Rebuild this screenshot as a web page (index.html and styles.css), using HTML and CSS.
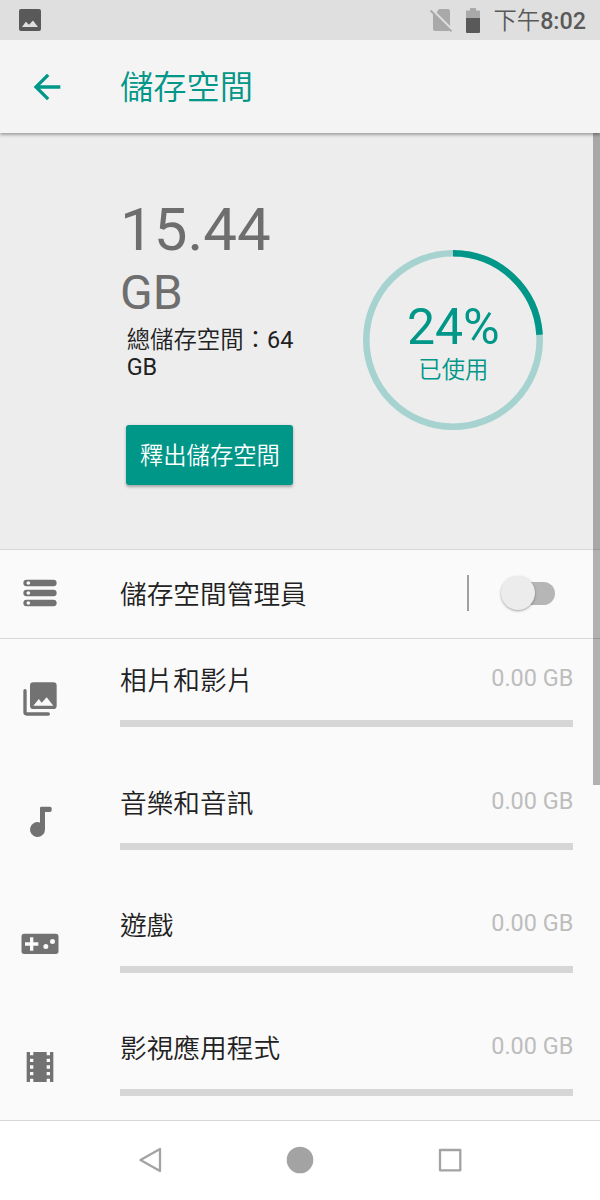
FILE: index.html
```html
<!DOCTYPE html>
<html lang="zh-Hant">
<head>
<meta charset="utf-8">
<title>儲存空間</title>
<link rel="stylesheet" href="styles.css">
</head>
<body>
<div class="screen">
  <header class="status">
    <svg class="status-photo" viewBox="0 0 22 22"><path fill-rule="evenodd" d="M2 0h18a2 2 0 0 1 2 2v18a2 2 0 0 1-2 2H2a2 2 0 0 1-2-2V2a2 2 0 0 1 2-2zM3 18h16l-5-6.500-4 4.300-3.200-3z"/></svg>
    <div class="status-right">
      <svg class="status-sim" viewBox="0 0 24 24"><path d="M10 1h9a2 2 0 0 1 2 2v15L7.500 4.500zM4 4.600L21 21.800a2 2 0 0 1-2 1.200H6a2 2 0 0 1-2-2z"/><path class="slash-gap" d="M3 1.800l20 20"/><path class="slash" d="M1.500 2.500l21 21"/></svg>
      <svg class="status-battery" viewBox="0 0 14 25"><path class="battery-empty" d="M4 0h6v2.500h3a1 1 0 0 1 1 1V10H0V3.500a1 1 0 0 1 1-1h3z"/><path d="M0 10h14v14a1 1 0 0 1-1 1H1a1 1 0 0 1-1-1z"/></svg>
      <span class="clock">下午<b>8:02</b></span>
    </div>
  </header>
  <div class="appbar">
    <svg class="back" viewBox="0 0 24 24"><path d="M20 11H7.830l5.590-5.590L12 4l-8 8 8 8 1.410-1.410L7.830 13H20z"/></svg>
    <h1 class="title">儲存空間</h1>
  </div>
  <main class="content">
    <section class="summary">
      <div class="usage">
        <div class="amount">15.44</div>
        <div class="unit">GB</div>
        <div class="total">總儲存空間：64<br>GB</div>
        <button class="free">釋出儲存空間</button>
      </div>
      <div class="donut">
        <svg class="ring" viewBox="0 0 180 180"><circle class="ring-track" cx="90" cy="90" r="86.700"/><circle class="ring-value" cx="90" cy="90" r="86.700" pathLength="100" transform="rotate(-90 90 90)"/></svg>
        <div class="donut-label"><div class="percent">24%</div><div class="used">已使用</div></div>
      </div>
    </section>
    <section class="manager">
      <svg class="icon" viewBox="0 0 24 24"><path fill-rule="evenodd" d="M4 4h16a2 2 0 0 1 0 4H4a2 2 0 0 1 0-4zm1 .900a1.100 1.100 0 1 0 0 2.200 1.100 1.100 0 0 0 0-2.200zM4 10h16a2 2 0 0 1 0 4H4a2 2 0 0 1 0-4zm1 .900a1.100 1.100 0 1 0 0 2.200 1.100 1.100 0 0 0 0-2.200zM4 16h16a2 2 0 0 1 0 4H4a2 2 0 0 1 0-4zm1 .900a1.100 1.100 0 1 0 0 2.200 1.100 1.100 0 0 0 0-2.200z"/></svg>
      <span class="label">儲存空間管理員</span>
      <span class="separator"></span>
      <span class="switch"><span class="thumb"></span></span>
    </section>
    <section class="list">
      <div class="item">
        <svg class="icon" viewBox="0 0 24 24"><path fill-rule="evenodd" d="M8 2h12a2 2 0 0 1 2 2v12a2 2 0 0 1-2 2H8a2 2 0 0 1-2-2V4a2 2 0 0 1 2-2zM8 16h12l-4-5-3 3.300-1.700-2.300z"/><path d="M2 7a1 1 0 0 1 2 0v13h13a1 1 0 0 1 0 2H4a2 2 0 0 1-2-2z"/></svg>
        <div class="body"><div class="line"><span class="label">相片和影片</span><span class="size">0.00 GB</span></div><div class="bar"></div></div>
      </div>
      <div class="item">
        <svg class="icon" viewBox="0 0 24 24"><path d="M12 3.600a.800.800 0 0 1 .800-.800H18a1 1 0 0 1 1 1V5a1 1 0 0 1-1 1h-3v10.500A4.500 4.500 0 1 1 12 12.260z"/></svg>
        <div class="body"><div class="line"><span class="label">音樂和音訊</span><span class="size">0.00 GB</span></div><div class="bar"></div></div>
      </div>
      <div class="item">
        <svg class="icon" viewBox="0 0 24 24"><path fill-rule="evenodd" d="M2.500 5.800h19A1.600 1.600 0 0 1 23.100 7.400v9a1.600 1.600 0 0 1-1.600 1.600h-19A1.600 1.600 0 0 1 .900 16.400v-9A1.600 1.600 0 0 1 2.500 5.800zM6 8v3H3v2h3v3h2v-3h3v-2H8V8zm9.500 4a1.500 1.500 0 1 0 0 3 1.500 1.500 0 0 0 0-3zm4-3a1.500 1.500 0 1 0 0 3 1.500 1.500 0 0 0 0-3z"/></svg>
        <div class="body"><div class="line"><span class="label">遊戲</span><span class="size">0.00 GB</span></div><div class="bar"></div></div>
      </div>
      <div class="item">
        <svg class="icon" viewBox="0 0 24 24"><path d="M18 3v2h-2V3H8v2H6V3H4v18h2v-2h2v2h8v-2h2v2h2V3h-2zM8 17H6v-2h2v2zm0-4H6v-2h2v2zm0-4H6V7h2v2zm10 8h-2v-2h2v2zm0-4h-2v-2h2v2zm0-4h-2V7h2v2z"/></svg>
        <div class="body"><div class="line"><span class="label">影視應用程式</span><span class="size">0.00 GB</span></div><div class="bar"></div></div>
      </div>
    </section>
    <div class="scrollbar"></div>
  </main>
  <nav class="nav">
    <svg class="nav-icon" viewBox="0 0 30 30"><path class="outline" d="M5.500 15L25 4v22z"/></svg>
    <svg class="nav-icon" viewBox="0 0 30 30"><circle cx="15" cy="15" r="13.300"/></svg>
    <svg class="nav-icon" viewBox="0 0 30 30"><rect class="outline" x="5" y="5" width="20.300" height="20.300"/></svg>
  </nav>
</div>
</body>
</html>
```
FILE: styles.css
```css
* { box-sizing: border-box; }
body { margin: 0; font-family: Roboto, "Noto Sans CJK TC DemiLight", "Noto Sans CJK TC", sans-serif; color: #212121; }
svg { display: block; flex: none; }
.screen { width: 600px; height: 1200px; display: flex; flex-direction: column; overflow: hidden; background: #fafafa; }

.status { height: 40px; flex: none; background: #dfdfdf; display: flex; align-items: center; justify-content: space-between; padding: 0 14px 0 19px; }
.status svg { fill: #595959; }
.status-photo { width: 22px; height: 22px; }
.status-right { display: flex; align-items: center; }
.status-right .status-sim { width: 24px; height: 24px; margin-right: 13px; fill: #a9a9a9; }
.slash { stroke: #a9a9a9; stroke-width: 1.8; }
.slash-gap { stroke: #dfdfdf; stroke-width: 2; }
.status .battery-empty, .status .status-sim { fill: #a9a9a9; }
.status-battery { width: 14px; height: 25px; margin-right: 14px; }
.clock { font-size: 23.3px; line-height: 40px; padding-top: 2px; color: #595959; white-space: nowrap; }
.clock b { font-weight: 500; }

.appbar { position: relative; z-index: 2; height: 93px; flex: none; display: flex; align-items: center; padding-left: 26.700px; background: #f4f4f4; box-shadow: 0 2px 3px rgba(0,0,0,.32); clip-path: inset(0 0 -8px 0); }
.back { width: 40px; height: 40px; fill: #009688; }
.title { margin: 0 0 0 53.300px; padding-top: 3px; font-size: 33.300px; font-weight: 400; line-height: 48px; color: #009688; }

.content { position: relative; flex: 1; min-height: 0; }
.summary { height: 416.500px; display: flex; background: #ededed; border-bottom: 1.500px solid #d8d8d8; padding: 62px 56.700px 0 120px; justify-content: space-between; }
.amount { font-size: 60px; line-height: 70px; color: #6e6e6e; }
.unit { font-size: 48px; line-height: 56px; color: #6e6e6e; }
.total { margin: 6px 0 0 6.700px; font-size: 23.400px; line-height: 27.300px; white-space: nowrap; }
.free { display: block; margin: 43px 0 0 6.400px; width: 167px; height: 60px; padding: 0 0 2px; border: 0; border-radius: 3px; background: #009688; color: #fff; font: inherit; font-size: 23.300px; box-shadow: 0 1.500px 3px rgba(0,0,0,.3); }
.donut { display: grid; width: 180px; height: 180px; margin-top: 55px; }
.donut > * { grid-area: 1 / 1; }
.ring { width: 180px; height: 180px; fill: none; stroke-width: 6.600; }
.ring-track { stroke: #a6d3cf; }
.ring-value { stroke: #009688; stroke-dasharray: 24 76; }
.donut-label { color: #009688; text-align: center; padding-top: 47.500px; }
.percent { font-size: 50px; line-height: 58px; }
.used { font-size: 23.300px; line-height: 28px; }

.icon { width: 40px; height: 40px; fill: #727272; }
.label { font-size: 26.700px; line-height: 40px; white-space: nowrap; }
.manager { height: 89.700px; display: flex; align-items: center; padding: 0 0 1px 20px; border-bottom: 1.500px solid #d8d8d8; }
.manager .label { margin-left: 60px; width: 346.500px; padding-top: 3px; }
.separator { width: 2px; height: 36px; background: #a0a0a0; }
.switch { margin-left: 39px; width: 47px; height: 23.300px; border-radius: 12px; background: #b6b6b6; display: flex; align-items: center; }
.thumb { flex: none; width: 34px; height: 34px; margin-left: -7px; border-radius: 50%; background: #ececec; box-shadow: 0 1px 2.500px rgba(0,0,0,.35); }

.item { height: 122.830px; display: flex; padding: 0 26.700px 0 20px; }
.item .icon { margin-top: 39.500px; }
.body { flex: 1; margin-left: 60px; }
.line { display: flex; justify-content: space-between; padding-top: 21.500px; height: 81.200px; }
.size { font-size: 23.450px; line-height: 34.500px; color: #bdbdbd; }
.bar { height: 6.700px; background: #d6d6d6; }
.scrollbar { position: absolute; right: 0; top: 0; width: 6.700px; height: 652px; background: rgba(0,0,0,.29); }

.nav { height: 80px; flex: none; display: flex; justify-content: center; align-items: center; gap: 120px; padding-bottom: 2px; background: #fff; border-top: 1.500px solid #d8d8d8; }
.nav-icon { width: 30px; height: 30px; fill: #a3a3a3; }
.outline { fill: none; stroke: #a3a3a3; stroke-width: 2.300; stroke-linejoin: round; }
```
